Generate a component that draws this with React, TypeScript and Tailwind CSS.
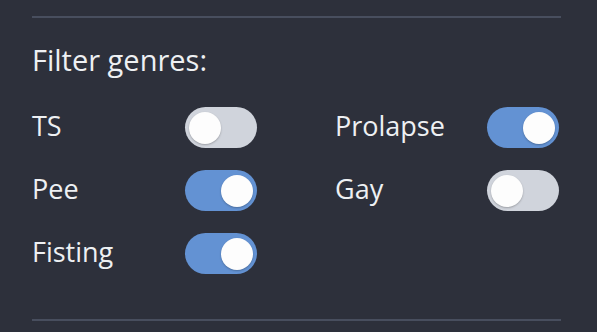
import React from "react";

const items: { label: string; on: boolean }[] = [
  { label: "TS", on: false },
  { label: "Prolapse", on: true },
  { label: "Pee", on: true },
  { label: "Gay", on: false },
  { label: "Fisting", on: true },
];

function Toggle({ on }: { on: boolean }) {
  return (
    <div
      className={
        "flex items-center w-[72px] h-[41px] rounded-full px-[4px] " +
        (on ? "bg-[#6392d3] justify-end" : "bg-[#d0d4dc] justify-start")
      }
    >
      <div className="w-[32px] h-[32px] rounded-full bg-[#fdfdfd] shadow-[0_1px_2px_rgba(0,0,0,0.25)]" />
    </div>
  );
}

export default function App() {
  return (
    <div
      className="w-[597px] h-[332px] bg-[#2d303b] pt-4 pl-8 pr-[36px] text-[#eef0f3] overflow-hidden"
      style={{ fontFamily: '"Open Sans", sans-serif' }}
    >
      <div className="h-[2px] bg-[#484e5e]" />
      <div className="mt-[21px] text-[29px] leading-[41px]">Filter genres:</div>
      <div className="mt-[27px] grid grid-cols-[225px_224px] gap-x-[78px] gap-y-[22px]">
        {items.map((it) => (
          <div key={it.label} className="flex items-center justify-between h-[41px]">
            <span className="text-[27px] leading-[41px] mb-[4px]">{it.label}</span>
            <Toggle on={it.on} />
          </div>
        ))}
      </div>
      <div className="mt-[45px] h-[2px] bg-[#484e5e]" />
    </div>
  );
}
